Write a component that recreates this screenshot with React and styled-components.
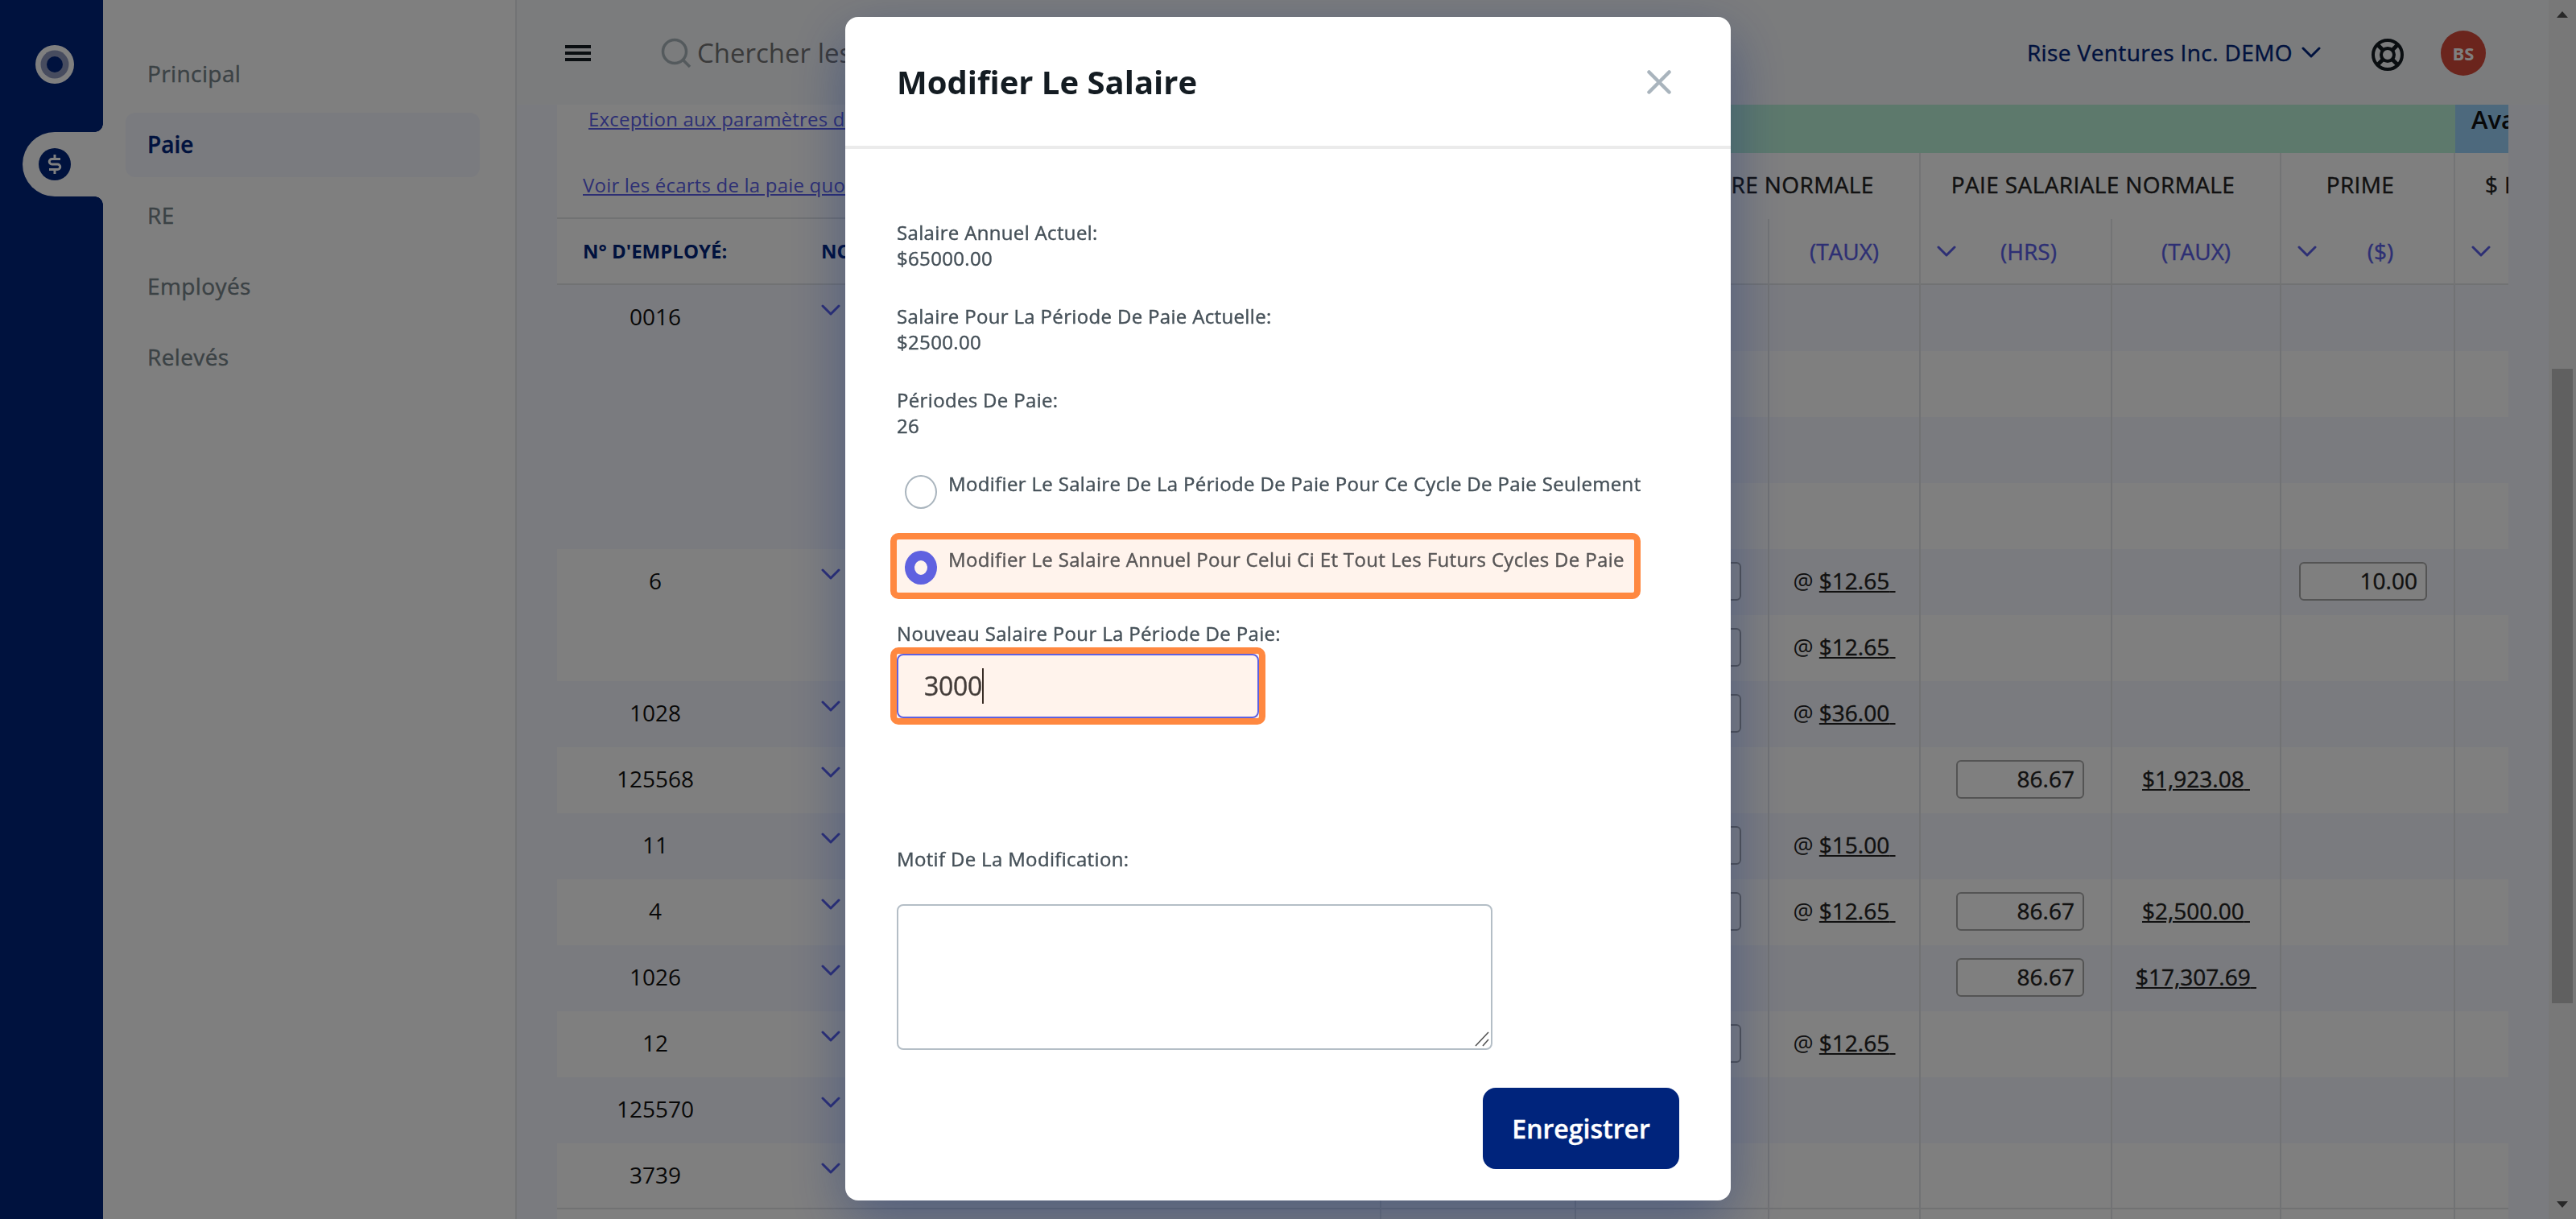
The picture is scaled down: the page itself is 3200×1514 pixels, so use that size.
import React from 'react';
import styled, { createGlobalStyle, css } from 'styled-components';

const EMPLOYEES = [
    { id: '0016', rows: [{}, {}, {}, {}] },
    { id: '6', rows: [{ hourly: '$12.65', bonus: '10.00' }, { hourly: '$12.65' }] },
    { id: '1028', rows: [{ hourly: '$36.00' }] },
    { id: '125568', rows: [{ salary: '$1,923.08' }] },
    { id: '11', rows: [{ hourly: '$15.00' }] },
    { id: '4', rows: [{ hourly: '$12.65', salary: '$2,500.00' }] },
    { id: '1026', rows: [{ salary: '$17,307.69' }] },
    { id: '12', rows: [{ hourly: '$12.65' }] },
    { id: '125570', rows: [{}] },
    { id: '3739', rows: [{}] },
];

const MENU = ['Principal', 'Paie', 'RE', 'Employés', 'Relevés'];

const Chevron = () => (
    <svg width="24" height="14" viewBox="0 0 24 14" fill="none" stroke="currentColor" strokeWidth="3" strokeLinecap="round" strokeLinejoin="round">
        <path d="M2 2l10 10L22 2" />
    </svg>
);

const Sidebar = () => (
    <>
        <Rail>
            <svg width="48" height="48" viewBox="0 0 48 48">
                <circle cx="24" cy="24" r="24" fill="#fff" />
                <circle cx="24" cy="24" r="17.5" fill="#8f98bf" />
                <circle cx="24" cy="24" r="10" fill="#00247c" />
            </svg>
            <RailTab>
                <svg width="40" height="40" viewBox="0 0 40 40" fill="none">
                    <circle cx="20" cy="20" r="20" fill="#00247c" />
                    <path d="M20 8v4M20 28v4M27 13.500h-10.500a3.250 3.250 0 0 0 0 6.500h7a3.250 3.250 0 0 1 0 6.500H13" stroke="#fff" strokeWidth="3" />
                </svg>
            </RailTab>
        </Rail>
        <Menu>
            {MENU.map((label) => (
                <MenuItem key={label} $active={label === 'Paie'}>{label}</MenuItem>
            ))}
        </Menu>
    </>
);

const TopBar = () => (
    <Bar>
        <svg width="32" height="20" viewBox="0 0 32 20" fill="#141c22">
            <path d="M0 0h32v4H0zM0 8h32v4H0zM0 16h32v4H0z" />
        </svg>
        <Search>
            <svg width="38" height="38" viewBox="0 0 38 38" fill="none" stroke="#a9b4ba" strokeWidth="3.500">
                <circle cx="17" cy="17" r="14.500" />
                <path d="M27 27l9 9" />
            </svg>
            Chercher les
        </Search>
        <Company>
            Rise Ventures Inc. DEMO
            <Chevron />
        </Company>
        <Help>
            <svg width="42" height="42" viewBox="0 0 42 42" fill="none" stroke="#141c22" strokeWidth="4">
                <circle cx="21" cy="21" r="18" />
                <circle cx="21" cy="21" r="8" />
                <path d="M8.500 8.500l7 7M33.500 8.500l-7 7M8.500 33.500l7-7M33.500 33.500l-7-7" strokeWidth="5" />
            </svg>
        </Help>
        <Avatar>BS</Avatar>
    </Bar>
);

const PayTable = () => (
    <Sheet>
        <EmployeePane>
            <LinkBlock>
                <TableLink $indent="39px">Exception aux paramètres de paie</TableLink>
                <TableLink $indent="32px">Voir les écarts de la paie quotidienne</TableLink>
            </LinkBlock>
            <EmployeeHead>
                <span>N° D'EMPLOYÉ:</span>
                <span>NOM:</span>
            </EmployeeHead>
            <div>
                {EMPLOYEES.map(({ id, rows }) => (
                    <EmployeeRow key={id} $span={rows.length}>
                        <EmployeeId>{id}</EmployeeId>
                        <Chevron />
                    </EmployeeRow>
                ))}
            </div>
        </EmployeePane>
        <AmountPane>
            <Section $tone="#bbf2d9" />
            <Section $tone="#9ad2fb" $open>Avantages</Section>
            <Group $cols={1} />
            <Group $cols={2}>PAIE HORAIRE NORMALE</Group>
            <Group $cols={2}>PAIE SALARIALE NORMALE</Group>
            <Group $cols={1}>PRIME</Group>
            <Group $cols={1} $open>$ ESSENCE</Group>
            <Unit />
            <Unit $menu><Chevron /><span>(HRS)</span></Unit>
            <Unit>(TAUX)</Unit>
            <Unit $menu><Chevron /><span>(HRS)</span></Unit>
            <Unit>(TAUX)</Unit>
            <Unit $menu><Chevron /><span>($)</span></Unit>
            <Unit $menu $open><Chevron /></Unit>
            {EMPLOYEES.flatMap(({ id, rows }) => rows.map((row, i) => (
                <AmountRow key={id + i} $last={id === '3739'}>
                    <Cell />
                    <Cell $end>{row.hourly && <Amount />}</Cell>
                    <Cell>{row.hourly && <>@&nbsp;<Rate>{row.hourly}&nbsp;</Rate></>}</Cell>
                    <Cell $end>{row.salary && <Amount>86.67</Amount>}</Cell>
                    <Cell>{row.salary && <Rate>{row.salary}&nbsp;</Rate>}</Cell>
                    <Cell $end>{row.bonus && <Amount>{row.bonus}</Amount>}</Cell>
                    <Cell $open />
                </AmountRow>
            )))}
            <TotalRow>
                <Cell /><Cell /><Cell /><Cell /><Cell /><Cell /><Cell $open />
            </TotalRow>
        </AmountPane>
    </Sheet>
);

const SalaryModal = () => (
    <Overlay>
        <Dialog>
            <DialogHead>
                <h2>Modifier Le Salaire</h2>
                <svg width="30" height="30" viewBox="0 0 30 30" stroke="#a9b4bd" strokeWidth="4.500" strokeLinecap="round">
                    <path d="M2.500 2.500l25 25M27.500 2.500l-25 25" />
                </svg>
            </DialogHead>
            <DialogBody>
                <Fact>Salaire Annuel Actuel:<br />$65000.00</Fact>
                <Fact>Salaire Pour La Période De Paie Actuelle:<br />$2500.00</Fact>
                <Fact>Périodes De Paie:<br />26</Fact>
                <Option>
                    <Radio />
                    <span>Modifier Le Salaire De La Période De Paie Pour Ce Cycle De Paie Seulement</span>
                </Option>
                <Option>
                    <Radio $checked />
                    <span>Modifier Le Salaire Annuel Pour Celui Ci Et Tout Les Futurs Cycles De Paie</span>
                    <Highlight $width={932} $top={-17} $height={82} />
                </Option>
                <FieldLabel>Nouveau Salaire Pour La Période De Paie:</FieldLabel>
                <SalaryField>
                    3000
                    <Caret />
                    <Highlight $width={466} $top={-10} $height={96} />
                </SalaryField>
                <FieldLabel>Motif De La Modification:</FieldLabel>
                <Reason>
                    <svg width="18" height="20" viewBox="0 0 18 20" stroke="#555" strokeWidth="1.600">
                        <path d="M1 19L17 2M10 19l7-8" />
                    </svg>
                </Reason>
                <Save>Enregistrer</Save>
            </DialogBody>
        </Dialog>
    </Overlay>
);

const App = () => (
    <>
        <GlobalStyle />
        <Page>
            <Sidebar />
            <Main>
                <TopBar />
                <PayTable />
            </Main>
            <ScrollBar>
                <Arrow />
                <Thumb />
                <Arrow $down />
            </ScrollBar>
        </Page>
        <SalaryModal />
    </>
);

const GlobalStyle = createGlobalStyle`
    *{
        box-sizing: border-box;
    }
    body{
        margin: 0;
        font-family: "Open Sans", "Noto Sans", sans-serif;
        overflow: hidden;
    }
    svg{
        display: block;
        flex: none;
    }
`;

const medium = css`
    font-weight: 400;
    letter-spacing: .014em;
    -webkit-text-stroke: .4px currentColor;
`;

const Page = styled.div`
    display: flex;
    width: 3200px;
    height: 1514px;
    overflow: hidden;
    background: #f5f7ff;
`;

const Rail = styled.aside`
    display: flex;
    flex-direction: column;
    flex: none;
    width: 128px;
    padding-top: 56px;
    background: #00247c;
    > svg{
        margin: 0 auto 60px 44px;
    }
`;

const RailTab = styled.div`
    position: relative;
    display: flex;
    align-items: center;
    height: 80px;
    margin-left: 28px;
    padding-left: 20px;
    background: #fff;
    border-radius: 40px 0 0 40px;
    &::before,
    &::after{
        content: '';
        position: absolute;
        right: 0;
        width: 10px;
        height: 10px;
    }
    &::before{
        top: -10px;
        background: radial-gradient(circle at 0 0, #00247c 9.5px, #fff 10px);
    }
    &::after{
        bottom: -10px;
        background: radial-gradient(circle at 0 100%, #00247c 9.5px, #fff 10px);
    }
`;

const Menu = styled.nav`
    display: flex;
    flex-direction: column;
    flex: none;
    gap: 8px;
    width: 514px;
    padding: 52px 44px 0 28px;
    background: #fff;
    border-right: 2px solid #e4e6ea;
`;

const MenuItem = styled.div`
    display: flex;
    align-items: center;
    height: 80px;
    padding: 0 0 3px 27px;
    border-radius: 12px;
    font-size: 28px;
    ${medium}
    ${({ $active }) => $active && 'font-weight: 600; letter-spacing: 0;'}
    color: ${({ $active }) => ($active ? '#00247c' : '#76848a')};
    background: ${({ $active }) => ($active ? '#f4f6fe' : 'none')};
`;

const Main = styled.main`
    flex: 1;
    min-width: 0;
`;

const Bar = styled.header`
    display: flex;
    align-items: center;
    height: 130px;
    padding: 2px 78px 0 60px;
    background: #f6f8fb;
`;

const Search = styled.div`
    display: flex;
    align-items: center;
    gap: 7px;
    margin-left: 87px;
    font-size: 33px;
    line-height: 44px;
    color: #757575;
`;

const Company = styled.div`
    display: flex;
    align-items: center;
    gap: 11px;
    margin-left: auto;
    padding-bottom: 2px;
    font-size: 28px;
    ${medium}
    color: #00247c;
`;

const Help = styled.div`
    margin-left: 62px;
    padding-top: 4px;
`;

const Avatar = styled.div`
    display: flex;
    align-items: center;
    justify-content: center;
    width: 56px;
    height: 56px;
    margin-left: 45px;
    border-radius: 50%;
    font-size: 22px;
    font-weight: 700;
    color: #fff;
    background: #d64b3b;
`;

const Sheet = styled.section`
    display: flex;
    width: 2424px;
    height: 1384px;
    margin-left: 50px;
    overflow: hidden;
    background: #fff;
`;

const EmployeePane = styled.div`
    flex: none;
    width: 1024px;
    border-right: 2px solid #e6e8ea;
`;

const LinkBlock = styled.div`
    height: 142px;
    border-bottom: 2px solid #e2e4e6;
`;

const TableLink = styled.div`
    height: 82px;
    padding-left: ${({ $indent }) => $indent};
    font-size: 24px;
    line-height: 35px;
    letter-spacing: .2px;
    color: #5b5fe8;
    text-decoration: underline;
`;

const EmployeeHead = styled.div`
    display: grid;
    grid-template-columns: 296px 1fr;
    align-items: center;
    height: 82px;
    padding: 0 0 2px 32px;
    border-bottom: 2px solid #e2e4e6;
    font-size: 24px;
    font-weight: 700;
    color: #00247c;
`;

const EmployeeRow = styled.div`
    display: flex;
    height: ${({ $span }) => $span * 82}px;
    padding-top: 24px;
    color: #5b5fe8;
    &:nth-child(odd){
        background: #f5f7ff;
    }
    &:last-child{
        border-bottom: 2px solid #e2e4e6;
    }
`;

const EmployeeId = styled.span`
    width: 244px;
    margin-right: 84px;
    font-size: 28px;
    line-height: 30px;
    text-align: center;
    color: #111;
`;

const AmountPane = styled.div`
    display: grid;
    flex: none;
    grid-template-columns: 242px 240px 188px 238px 210px 216px 360px;
    grid-auto-rows: max-content;
`;

const Section = styled.div`
    grid-column: span ${({ $open }) => ($open ? 1 : 6)};
    height: 60px;
    padding-left: 20px;
    font-size: 31px;
    font-weight: 600;
    line-height: 36px;
    color: #111;
    background: ${({ $tone }) => $tone};
`;

const Group = styled.div`
    grid-column: span ${({ $cols }) => $cols};
    height: 82px;
    padding: ${({ $open }) => ($open ? '0 0 0 37px' : '0 18px 0 0')};
    border-right: 2px solid #e6e8ea;
    font-size: 28px;
    ${medium}
    line-height: 79px;
    text-align: ${({ $open }) => ($open ? 'left' : 'center')};
    color: #222;
`;

const Unit = styled.div`
    display: flex;
    align-items: center;
    justify-content: center;
    height: 82px;
    padding: ${({ $menu }) => ($menu ? '0 12px 0 20px' : '0')};
    border-right: 2px solid #e6e8ea;
    border-bottom: 2px solid #e2e4e6;
    font-size: 28px;
    ${medium}
    letter-spacing: 0;
    color: #5b5fe8;
    span{
        flex: 1;
        text-align: center;
    }
    svg{
        margin-right: ${({ $open }) => ($open ? 'auto' : 0)};
    }
`;

const AmountRow = styled.div`
    display: grid;
    grid-column: 1 / -1;
    grid-template-columns: subgrid;
    height: 82px;
    border-bottom: ${({ $last }) => ($last ? '2px solid #e2e4e6' : 'none')};
    background: #fff;
    &:nth-child(odd){
        background: #f5f7ff;
    }
`;

const TotalRow = styled(AmountRow)`
    height: 12px;
    && {
        background: #fff;
    }
`;

const Cell = styled.div`
    display: flex;
    align-items: center;
    justify-content: ${({ $end }) => ($end ? 'flex-end' : 'center')};
    padding: ${({ $end }) => ($end ? '0 33px 2px 0' : '0 0 4px')};
    border-right: 2px solid #e2e4e8;
    font-size: 28px;
    color: #222;
`;

const Rate = styled.span`
    -webkit-text-stroke: .4px currentColor;
    text-decoration: underline;
`;

const Amount = styled.div`
    width: 159px;
    height: 48px;
    padding-right: 10px;
    border: 2px solid #a8a8a8;
    border-radius: 6px;
    -webkit-text-stroke: .4px currentColor;
    line-height: 42px;
    text-align: right;
    background: #fff;
`;

const ScrollBar = styled.div`
    display: flex;
    flex-direction: column;
    align-items: center;
    flex: none;
    width: 34px;
    padding: 14px 0;
    background: #f1f1f1;
`;

const Arrow = styled.i`
    border: 7px solid transparent;
    border-width: ${({ $down }) => ($down ? '8px 7px 0' : '0 7px 8px')};
    border-color: ${({ $down }) => ($down ? '#505050 transparent transparent' : 'transparent transparent #505050')};
`;

const Thumb = styled.div`
    width: 26px;
    height: 788px;
    margin: 436px 0 auto;
    background: #c1c1c1;
`;

const Overlay = styled.div`
    position: fixed;
    inset: 0;
    display: flex;
    justify-content: center;
    align-items: flex-start;
    padding-top: 21px;
    background: rgba(0, 0, 0, .5);
`;

const Dialog = styled.div`
    width: 1100px;
    height: 1470px;
    border-radius: 16px;
    background: #fff;
    box-shadow: 0 24px 70px rgba(0, 36, 124, .38);
`;

const DialogHead = styled.div`
    display: flex;
    align-items: center;
    justify-content: space-between;
    height: 164px;
    padding: 2px 74px 0 64px;
    border-bottom: 4px solid #ebebeb;
    h2{
        margin: 0;
        font-size: 40px;
        font-weight: 700;
        line-height: 56px;
        color: #141c22;
    }
`;

const DialogBody = styled.div`
    display: flex;
    flex-direction: column;
    align-items: flex-start;
    padding: 88px 64px 0;
    font-size: 24px;
    ${medium}
    line-height: 32px;
    color: #455058;
`;

const Fact = styled.p`
    margin: 0 0 40px;
`;

const Option = styled.div`
    position: relative;
    display: flex;
    gap: 14px;
    height: 42px;
    margin-bottom: 52px;
    padding-left: 10px;
    white-space: nowrap;
    & + &{
        margin-bottom: 50px;
    }
`;

const Radio = styled.span`
    width: 40px;
    height: 42px;
    margin-top: 5px;
    border: ${({ $checked }) => ($checked ? '12px solid #4d5df2' : '2px solid #a9b4bd')};
    border-radius: 50%;
`;

// sits over the field it marks, 8px outside its left edge
const Highlight = styled.span`
    position: absolute;
    left: -8px;
    top: ${({ $top }) => $top}px;
    width: ${({ $width }) => $width}px;
    height: ${({ $height }) => $height}px;
    border: 8px solid #ff8840;
    border-radius: 10px;
    background: rgba(255, 136, 64, .1);
    background-clip: padding-box;
`;

const FieldLabel = styled.label`
    display: block;
`;

const SalaryField = styled.div`
    position: relative;
    display: flex;
    align-items: center;
    width: 450px;
    height: 80px;
    margin: 9px 0 159px;
    padding-left: 32px;
    border: 2px solid #4d5df2;
    border-radius: 8px;
    font-size: 32px;
    letter-spacing: -.3px;
    color: #2e3438;
    ${Highlight}{
        left: -10px;
    }
`;

const Caret = styled.span`
    width: 2px;
    height: 44px;
    background: #222;
`;

const Reason = styled.div`
    display: flex;
    align-items: flex-end;
    justify-content: flex-end;
    width: 740px;
    height: 181px;
    margin: 40px 0 47px;
    padding: 2px;
    border: 2px solid #b4bec6;
    border-radius: 8px;
`;

const Save = styled.button`
    align-self: flex-end;
    width: 244px;
    height: 101px;
    padding: 0;
    border: 0;
    border-radius: 16px;
    font-family: inherit;
    font-size: 32px;
    font-weight: 600;
    color: #fff;
    background: #00247c;
`;

export default App;
